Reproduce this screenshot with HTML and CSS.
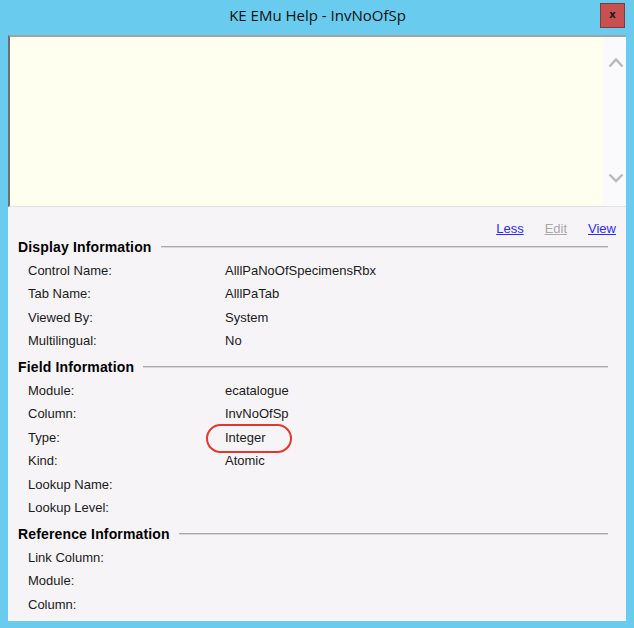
FILE: index.html
```html
<!DOCTYPE html>
<html>
<head>
<meta charset="utf-8">
<title>KE EMu Help - InvNoOfSp</title>
<link rel="stylesheet" href="styles.css">
</head>
<body>
<div class="window">
  <div class="titlebar">
    <div class="title">KE EMu Help - InvNoOfSp</div>
    <div class="close">x</div>
  </div>
  <div class="client">
    <div class="notes">
      <div class="notes-text"></div>
      <div class="scroll">
        <svg class="chev" width="16" height="11" viewBox="0 0 16 11"><polyline points="1.5,9.5 8,2.5 14.5,9.5" fill="none" stroke="#b9b9b9" stroke-width="2.4"/></svg>
        <svg class="chev" width="16" height="10" viewBox="0 0 16 10"><polyline points="1.5,1.5 8,8 14.5,1.5" fill="none" stroke="#b9b9b9" stroke-width="2.4"/></svg>
      </div>
    </div>
    <div class="panel">
      <div class="links">
        <span class="link">Less</span>
        <span class="link disabled">Edit</span>
        <span class="link">View</span>
      </div>

      <div class="heading"><span>Display Information</span><span class="rule"></span></div>
      <div class="rows">
        <div class="label">Control Name:</div><div class="value">AlllPaNoOfSpecimensRbx</div>
        <div class="label">Tab Name:</div><div class="value">AlllPaTab</div>
        <div class="label">Viewed By:</div><div class="value">System</div>
        <div class="label">Multilingual:</div><div class="value">No</div>
      </div>

      <div class="heading sect"><span>Field Information</span><span class="rule"></span></div>
      <div class="rows">
        <div class="label">Module:</div><div class="value">ecatalogue</div>
        <div class="label">Column:</div><div class="value">InvNoOfSp</div>
        <div class="label">Type:</div><div class="value"><span class="circled">Integer</span></div>
        <div class="label">Kind:</div><div class="value">Atomic</div>
        <div class="label">Lookup Name:</div><div class="value"></div>
        <div class="label">Lookup Level:</div><div class="value"></div>
      </div>

      <div class="heading sect"><span>Reference Information</span><span class="rule"></span></div>
      <div class="rows">
        <div class="label">Link Column:</div><div class="value"></div>
        <div class="label">Module:</div><div class="value"></div>
        <div class="label">Column:</div><div class="value"></div>
      </div>
    </div>
  </div>
</div>
</body>
</html>
```

FILE: styles.css
```css
html, body {
  margin: 0;
  padding: 0;
}
body {
  background: #69cbee;
  width: 634px;
  height: 628px;
  overflow: hidden;
  font-family: "Liberation Sans", Arial, sans-serif;
  font-size: 13px;
  color: #000;
}
.window {
  display: flex;
  flex-direction: column;
}
.titlebar {
  height: 35px;
  display: flex;
  align-items: flex-start;
  padding: 0 9px 0 35px;
  box-sizing: border-box;
}
.title {
  flex: 1;
  text-align: center;
  font-family: "Open Sans", "Noto Sans", sans-serif;
  font-size: 15px;
  line-height: 30px;
  color: #111;
}
.close {
  margin-top: 3px;
  width: 25px;
  height: 25px;
  box-sizing: border-box;
  background: #c75050;
  border: 1px solid #7f3a3a;
  color: #1a1a1a;
  font-family: "DejaVu Sans", sans-serif;
  font-weight: bold;
  font-size: 10px;
  line-height: 22px;
  text-align: center;
}
.client {
  margin-left: 8px;
  width: 618px;
  height: 586px;
  display: flex;
  flex-direction: column;
  background: #f7f4f8;
}
.notes {
  height: 172px;
  display: flex;
  box-sizing: border-box;
  border-top: 2px solid #a2a2a2;
  border-left: 2px solid #6e6e6e;
  border-bottom: 1px solid #e2e2e2;
}
.notes-text {
  flex: 1;
  background: #fffff0;
}
.scroll {
  width: 21px;
  background: #fafafc;
  display: flex;
  flex-direction: column;
  justify-content: space-between;
  align-items: center;
  padding: 20px 0 23px 2px;
}
.chev {
  display: block;
}
.panel {
  padding: 14px 18px 0 10px;
}
.links {
  display: flex;
  justify-content: flex-end;
  gap: 21px;
  margin-right: -8px;
  line-height: 16px;
}
.link {
  color: #2a2aff;
  text-decoration: underline;
}
.link.disabled {
  color: #a8a8a8;
}
.heading {
  display: flex;
  align-items: center;
  height: 23.5px;
  margin-top: -2px;
  font-weight: bold;
  font-size: 14px;
  letter-spacing: 0.15px;
}
.heading.sect {
  margin-top: 2.5px;
}
.rule {
  flex: 1;
  margin-left: 9px;
  border-top: 1px solid #a9a9a9;
  border-bottom: 1px solid #d8d8d8;
}
.rows {
  display: grid;
  grid-template-columns: 197px 1fr;
  grid-auto-rows: 23.5px;
  line-height: 23.5px;
  padding-left: 10px;
  color: #1a1a1a;
}
.circled {
  position: relative;
}
.circled::after {
  content: "";
  position: absolute;
  left: -19px;
  top: -6px;
  width: 86px;
  height: 29px;
  box-sizing: border-box;
  border: 2px solid #e2372c;
  border-radius: 15px;
}
```
